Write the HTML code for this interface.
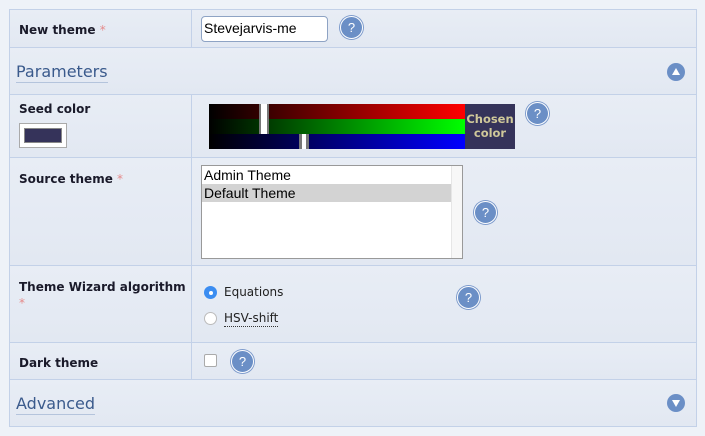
<!DOCTYPE html><html><head><style>
body{margin:0;width:705px;height:436px;background:#eef2f8;font-family:"DejaVu Sans",Verdana,sans-serif;position:relative;overflow:hidden}
.a{position:absolute}
.row{position:absolute;left:9px;width:686px;border:1px solid #c3d1e8;border-bottom:none;background:linear-gradient(#e8edf5,#e2e8f2)}
.div{position:absolute;left:181px;top:0;bottom:0;border-left:1px solid #c3d1e8}
.lbl{position:absolute;left:9px;font-weight:bold;font-size:12px;color:#1a1a2a}
.req{color:#e58a8a;font-weight:normal}
.h{position:absolute;width:21px;height:21px;border-radius:50%;background:#6b8fc6;border:1.5px solid #fff;box-shadow:0 0 0 1px #7d9bcc;color:#fff;font-size:13px;text-align:center;line-height:21px;font-family:"Liberation Sans",sans-serif}
.sec{position:absolute;left:6px;font-size:16px;color:#3a5a8c;font-family:"DejaVu Sans",sans-serif;border-bottom:1px solid #b4c4dc;line-height:20px}
.tg{position:absolute;width:18px;height:18px;border-radius:50%;background:#6b8fc6}
</style></head><body>
<div class="row" style="top:9px;height:37px"><div class="div"></div><div class="lbl" style="top:13px">New theme <span class="req">*</span></div>
<div class="a" style="left:191px;top:6px;border:1px solid #8ea3c4;border-radius:4px;background:#fff;font-family:'Liberation Sans',sans-serif;font-size:14px;line-height:23px;padding-left:2px;box-sizing:border-box;width:127px;height:26px">Stevejarvis-me</div>
<div class="h" style="left:330px;top:6px">?</div></div>
<div class="row" style="top:47px;height:46px"><div class="sec" style="top:14px">Parameters</div><div class="tg" style="left:657px;top:15px"><div class="a" style="left:5px;top:5px;border-left:4px solid transparent;border-right:4px solid transparent;border-bottom:7px solid #fff"></div></div></div>
<div class="row" style="top:94px;height:62px"><div class="div"></div><div class="lbl" style="top:7px">Seed color</div>
<div class="a" style="left:9px;top:28px;width:48px;height:25px;background:#fff;border:1px solid #aaa;box-sizing:border-box"><div class="a" style="left:4px;top:4px;width:38px;height:15px;background:#35335a;border:1px solid #888;box-sizing:border-box"></div></div>
<div class="a" style="left:199px;top:9px;width:256px;height:15px;background:linear-gradient(90deg,#000,#f00)"></div>
<div class="a" style="left:199px;top:24px;width:256px;height:15px;background:linear-gradient(90deg,#000,#0f0)"></div>
<div class="a" style="left:199px;top:39px;width:256px;height:15px;background:linear-gradient(90deg,#000,#00f)"></div>
<div class="a" style="left:249px;top:9px;height:30px;background:#fff;border-left:2px solid #777;border-right:2px solid #777;box-sizing:border-box;width:10px"></div>
<div class="a" style="left:289px;top:39px;width:10px;height:15px;background:#fff;border-left:3px solid #777;border-right:3px solid #777;box-sizing:border-box"></div>
<div class="a" style="left:455px;top:9px;width:50px;height:45px;background:#35335a;color:#cfc89a;font-weight:bold;font-size:11.5px;text-align:center;line-height:14px;padding-top:8px;box-sizing:border-box">Chosen<br>color</div>
<div class="h" style="left:516px;top:7px">?</div></div>
<div class="row" style="top:157px;height:107px"><div class="div"></div><div class="lbl" style="top:14px">Source theme <span class="req">*</span></div>
<div class="a" style="left:191px;top:7px;width:262px;height:94px;background:#fff;border:1px solid #999;box-sizing:border-box;font-family:'Liberation Sans',sans-serif;font-size:14px;line-height:18px">
<div style="padding-left:2px">Admin Theme</div><div style="padding-left:2px;background:#d3d3d3;width:247px">Default Theme</div>
<div class="a" style="right:0;top:0;width:10px;height:92px;background:#f7f7f7;border-left:1px solid #e6e6e6"></div></div>
<div class="h" style="left:464px;top:43px">?</div></div>
<div class="row" style="top:265px;height:76px"><div class="div"></div><div class="lbl" style="top:13px;line-height:16px">Theme Wizard algorithm<br><span class="req">*</span></div>
<div class="a" style="left:194px;top:20px;width:13px;height:13px;border-radius:50%;background:#3b8df1"><div class="a" style="left:4.5px;top:4.5px;width:4px;height:4px;border-radius:50%;background:#fff"></div></div>
<div class="a" style="left:214px;top:19px;font-size:12px;color:#222">Equations</div>
<div class="a" style="left:194px;top:46px;width:13px;height:13px;border-radius:50%;background:#fff;border:1px solid #bbb;box-sizing:border-box"></div>
<div class="a" style="left:214px;top:45px;font-size:12px;color:#222;border-bottom:1px dotted #333;line-height:15px">HSV-shift</div>
<div class="h" style="left:447px;top:20px">?</div></div>
<div class="row" style="top:342px;height:36px"><div class="div"></div><div class="lbl" style="top:13px">Dark theme</div>
<div class="a" style="left:194px;top:11px;width:11px;height:11px;border:1px solid #aaa;border-radius:2px;background:#fff"></div>
<div class="h" style="left:221px;top:7px">?</div></div>
<div class="row" style="top:379px;height:46px;border-bottom:1px solid #c3d1e8"><div class="sec" style="top:14px">Advanced</div><div class="tg" style="left:657px;top:14px"><div class="a" style="left:5px;top:6px;border-left:4px solid transparent;border-right:4px solid transparent;border-top:7px solid #fff"></div></div></div>
</body></html>
